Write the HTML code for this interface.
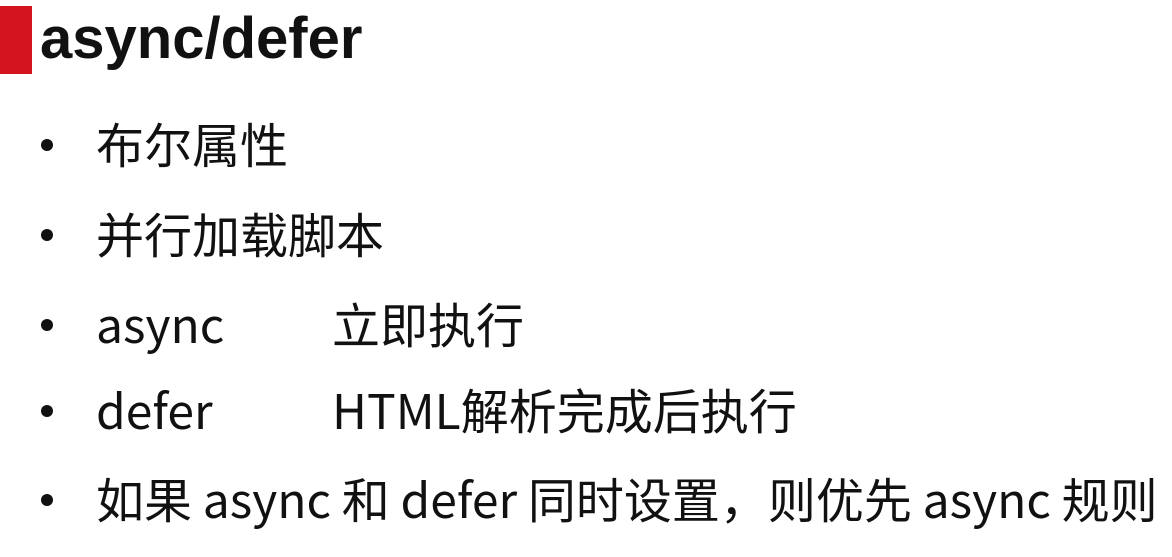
<!DOCTYPE html>
<html><head><meta charset="utf-8"><style>
html,body{margin:0;padding:0;background:#fff;width:1172px;height:557px;overflow:hidden}
body{position:relative;font-family:"Liberation Sans","Noto Sans CJK SC",sans-serif;color:#111}
.bar{position:absolute;left:0;top:6px;width:32px;height:68px;background:#d4141c}
.title{position:absolute;left:40px;top:4px;font-size:58px;font-weight:bold;line-height:70px;font-family:"Liberation Sans","Noto Sans CJK SC",sans-serif;letter-spacing:0px}
.li{position:absolute;left:96px;font-size:48px;line-height:60px;white-space:nowrap;font-family:"Noto Sans CJK SC",sans-serif}
.dot{position:absolute;left:41px;width:12px;height:12px;border-radius:50%;background:#111}
.tab{position:absolute;left:236px}
</style></head><body>
<div class="bar"></div>
<div class="title">async/defer</div>
<div class="dot" style="top:139px"></div><div class="li" style="top:112px">布尔属性</div>
<div class="dot" style="top:229px"></div><div class="li" style="top:202px">并行加载脚本</div>
<div class="dot" style="top:319px"></div><div class="li" style="top:292px">async<span class="tab">立即执行</span></div>
<div class="dot" style="top:405px"></div><div class="li" style="top:378px">defer<span class="tab">HTML解析完成后执行</span></div>
<div class="dot" style="top:494px"></div><div class="li" style="top:467px">如果 async 和 defer 同时设置，则优先 async 规则</div>
</body></html>
